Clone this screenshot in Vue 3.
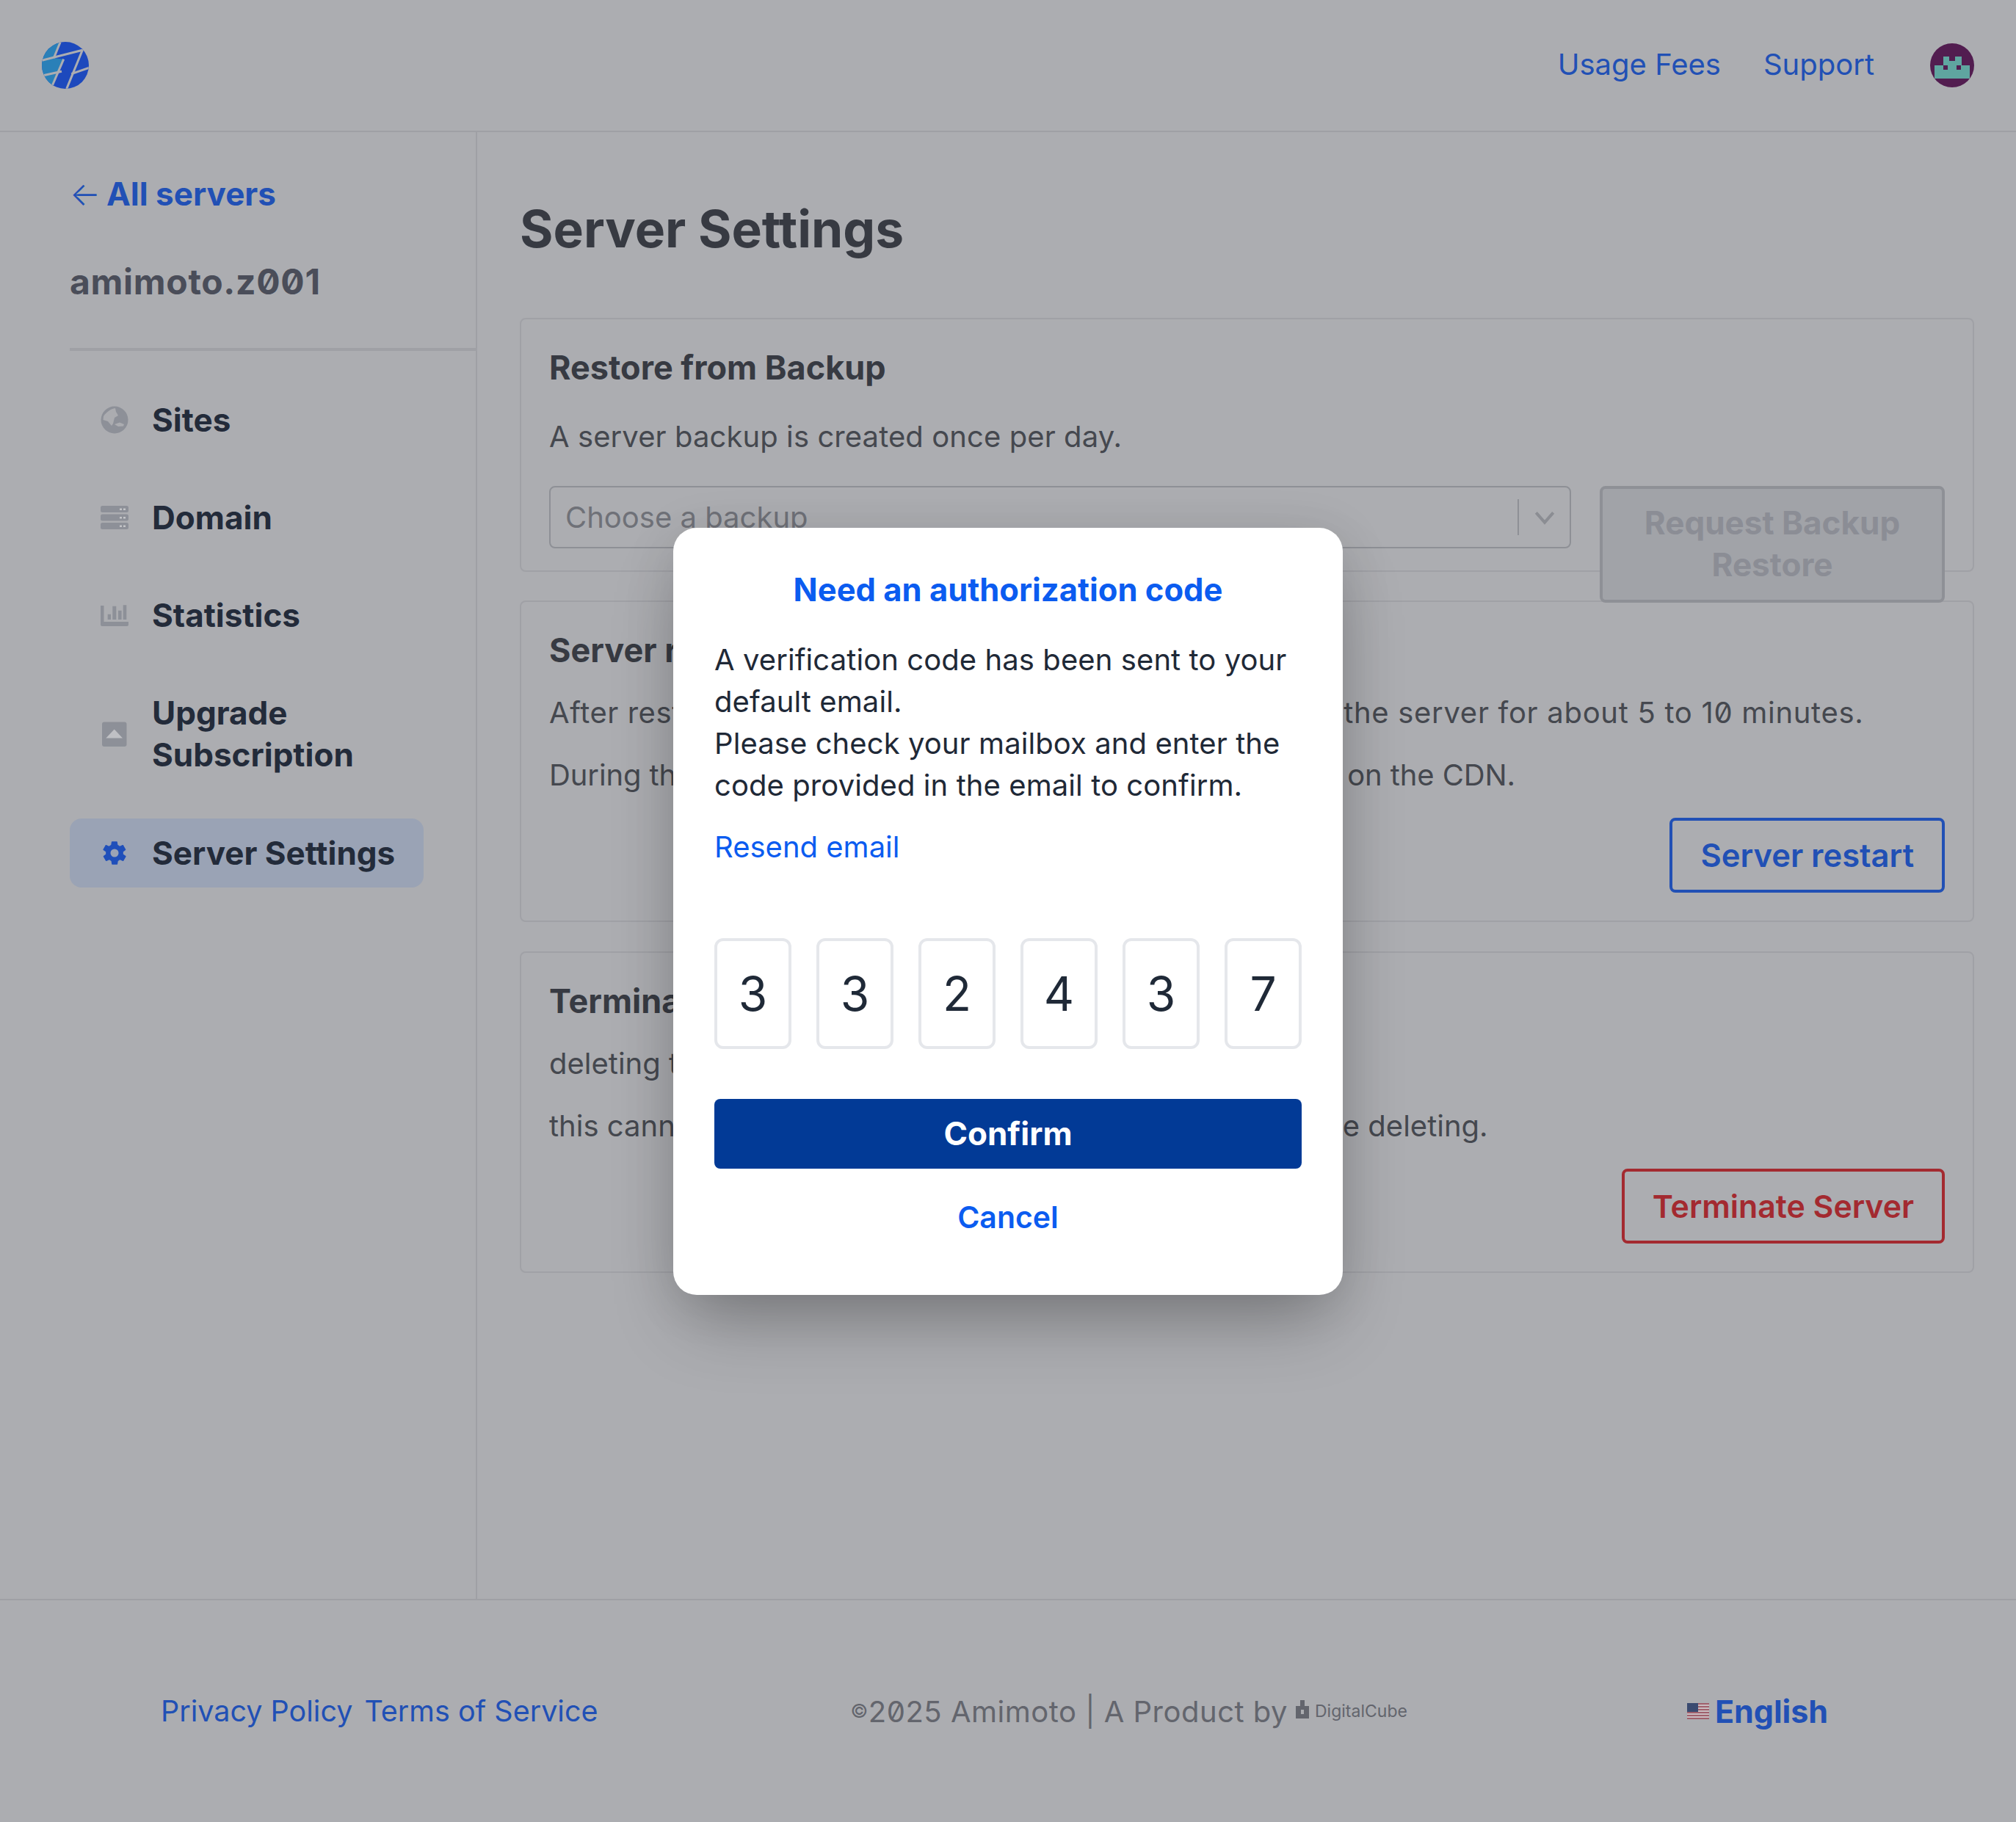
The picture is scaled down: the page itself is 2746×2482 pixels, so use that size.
<template>
  <div class="page">
    <header class="top">
      <svg class="logo" viewBox="0 0 64 64">
        <defs><clipPath id="lc"><circle cx="32" cy="32" r="32"/></clipPath></defs>
        <g clip-path="url(#lc)">
          <rect width="64" height="64" fill="#1d49bd"/>
          <path d="M0 0H25.3L16.3 22L29.7 23.7L15.3 57L15 64H0Z" fill="#2a80b8"/>
          <g stroke="#acadb1" stroke-width="3" fill="none">
            <path d="M25.3 0L16.3 22"/>
            <path d="M0 25.3L55.3 11.3L33.7 64"/>
            <path d="M29.7 23.7L14.5 59"/>
            <path d="M40.3 43.7L64 35.3"/>
            <path d="M2 45.8L27 40.3"/>
          </g>
        </g>
      </svg>
      <nav class="top-links">
        <a class="lnk">Usage Fees</a>
        <a class="lnk">Support</a>
        <svg class="avatar" viewBox="0 0 60 60">
          <circle cx="30" cy="30" r="30" fill="#521d50"/>
          <path d="M6 30H18V18H26V24H34V18H43V30H54V48H6Z" fill="#5fa5a0"/>
          <rect x="18" y="30" width="6" height="6" fill="#521d50"/>
          <rect x="36" y="30" width="6" height="6" fill="#521d50"/>
        </svg>
      </nav>
    </header>
    <div class="body">
      <aside class="side">
        <a class="back"><span class="arrow">←</span><b>All servers</b></a>
        <div class="srv">amimoto.z001</div>
        <ul class="menu">
          <li class="item">
            <svg class="ic" viewBox="0 0 38 38"><circle cx="19" cy="19" r="18.5" fill="#8d9098"/><path d="M4 14C8 8 14 4 20 3L21 8 24 13 19 16 17 24 15 27 10 21 3.500 19Z M19 25L26 22.500 32 25 31 27.500 24 28Z" fill="#abacb0"/></svg>
            <span>Sites</span>
          </li>
          <li class="item">
            <svg class="ic" viewBox="0 0 38 38"><path d="M2.500 3H35.500A2.500 2.500 0 0 1 38 5.500V9.500A2.500 2.500 0 0 1 35.500 12H2.500A2.500 2.500 0 0 1 0 9.500V5.500A2.500 2.500 0 0 1 2.500 3Z M2.500 14.500H35.500A2.500 2.500 0 0 1 38 17V21A2.500 2.500 0 0 1 35.500 23.500H2.500A2.500 2.500 0 0 1 0 21V17A2.500 2.500 0 0 1 2.500 14.500Z M2.500 26H35.500A2.500 2.500 0 0 1 38 28.500V32.500A2.500 2.500 0 0 1 35.500 35H2.500A2.500 2.500 0 0 1 0 32.500V28.500A2.500 2.500 0 0 1 2.500 26Z" fill="#8d9098"/><path d="M26 6.500h3v2.500h-3Z M31 6.500h3v2.500h-3Z M26 18h3v2.500h-3Z M31 18h3v2.500h-3Z M26 29.500h3v2.500h-3Z M31 29.500h3v2.500h-3Z" fill="#c3c4c7"/></svg>
            <span>Domain</span>
          </li>
          <li class="item">
            <svg class="ic" viewBox="0 0 38 38"><path d="M0 5H4.500V27H38V31A2 2 0 0 1 36 33H2A2 2 0 0 1 0 31Z M9.700 16.700H14V24H9.700Z M16.300 5.700H21.300V24H16.300Z M24 11.700H28.600V24H24Z M30.700 4.300H35.300V24H30.700Z" fill="#8d9098"/></svg>
            <span>Statistics</span>
          </li>
          <li class="item">
            <svg class="ic" viewBox="0 0 38 38"><rect x="2" y="2.500" width="33.500" height="33.500" rx="3" fill="#8d9098"/><path d="M7.300 24.500L18.700 12.500 30 24.500Z" fill="#bfc0c4"/></svg>
            <span>Upgrade<br>Subscription</span>
          </li>
          <li class="item on">
            <svg class="ic" viewBox="0 0 24 24"><path fill="#1f4fba" fill-rule="evenodd" d="M19.400 13c.1-.3.1-.7.1-1s0-.7-.1-1l2.100-1.600c.2-.2.2-.4.1-.6l-2-3.500c-.1-.2-.4-.3-.6-.2l-2.500 1c-.5-.4-1.100-.7-1.700-1l-.4-2.600c0-.3-.2-.5-.5-.5h-4c-.3 0-.5.2-.5.5l-.4 2.600c-.6.3-1.200.6-1.700 1l-2.500-1c-.2-.1-.5 0-.6.2l-2 3.500c-.1.2-.1.4.1.6L4.600 11c-.1.3-.1.7-.1 1s0 .7.1 1l-2.100 1.600c-.2.2-.2.4-.1.6l2 3.500c.1.2.4.3.6.2l2.500-1c.5.4 1.100.7 1.700 1l.4 2.600c0 .3.2.5.5.5h4c.3 0 .5-.2.5-.5l.4-2.600c.6-.3 1.200-.6 1.700-1l2.500 1c.2.1.5 0 .6-.2l2-3.500c.1-.2.1-.4-.1-.6ZM12 15.500a3.500 3.500 0 1 1 0-7 3.500 3.500 0 0 1 0 7Z"/></svg>
            <span>Server Settings</span>
          </li>
        </ul>
      </aside>
      <main class="main">
        <h1>Server Settings</h1>
        <section class="card c1">
          <h2>Restore from Backup</h2>
          <p>A server backup is created once per day.</p>
          <div class="row">
            <div class="sel">
              <span>Choose a backup</span>
              <i class="sep"></i>
              <svg class="chev" viewBox="0 0 24 24"><path d="M5 8l7 8 7-8" fill="none" stroke="#8b8d93" stroke-width="2.400"/></svg>
            </div>
            <div class="btn dis">Request Backup<br>Restore</div>
          </div>
        </section>
        <section class="card c2">
          <h2>Server restart</h2>
          <p class="t1 wide">After restarting the server, you will not be able to reach <span class="end">the server for about 5 to 10 minutes.</span></p>
          <p class="t2 tight">During this time, your cached pages will still be displayed on the CDN.</p>
          <div class="act"><div class="btn pri">Server restart</div></div>
        </section>
        <section class="card c2 c3">
          <h2>Terminate Server</h2>
          <p class="t1">deleting this server will also remove all of its data,</p>
          <p class="t2">this cannot be undone, so please make any backup before deleting.</p>
          <div class="act"><div class="btn red">Terminate Server</div></div>
        </section>
      </main>
    </div>
    <footer class="foot">
      <div class="f-l"><a class="lnk">Privacy Policy</a><a class="lnk">Terms of Service</a></div>
      <div class="f-c">
        <span class="copy"><small>©</small>2025 Amimoto | A Product by</span>
        <svg class="dc" viewBox="0 0 18 25"><path d="M0 8H6V0H12V8H18V25H0Z M7 13V19H11V13Z" fill="#63656d" fill-rule="evenodd"/></svg>
        <span class="dct">DigitalCube</span>
      </div>
      <div class="f-r">
        <svg class="flag" viewBox="0 0 30 22">
          <rect width="30" height="22" fill="#c9bcc0"/>
          <path d="M0 0H30V2H0Z M0 4H30V6H0Z M0 8H30V10H0Z M0 12H30V14H0Z M0 16H30V18H0Z M0 20H30V22H0Z" fill="#a0606c"/>
          <rect width="15" height="12" fill="#3a4a70"/>
        </svg>
        <b>English</b>
      </div>
    </footer>
    <div class="backdrop">
      <div class="modal">
        <h3>Need an authorization code</h3>
        <p class="msg">A verification code has been sent to your default email.<br>Please check your mailbox and enter the code provided in the email to confirm.</p>
        <a class="resend">Resend email</a>
        <div class="code">
          <span v-for="(d, i) in digits" :key="i" class="digit">{{ d }}</span>
        </div>
        <div class="confirm">Confirm</div>
        <div class="cancel">Cancel</div>
      </div>
    </div>
  </div>
</template>

<script setup>
const digits = ['3', '3', '2', '4', '3', '7']
</script>

<style>
html, body { margin: 0; }
</style>

<style scoped>
.page {
  position: relative; width: 2746px; height: 2482px; background: #acadb1; overflow: hidden;
  font-family: Inter, "Liberation Sans", sans-serif; font-size: 40px; line-height: 57px; color: #3c3f47;
  font-feature-settings: "zero";
  display: flex; flex-direction: column;
}
.top { height: 178px; flex: none; border-bottom: 2px solid #9fa0a5; display: flex; align-items: center; justify-content: space-between; padding: 0 57px; }
.logo { width: 64px; height: 64px; }
.top-links { display: flex; align-items: center; }
.top-links .lnk { padding-bottom: 3px; }
.lnk { color: #2150b5; }
.top-links .lnk:nth-child(1) { margin-right: 58px; }
.top-links .lnk:nth-child(2) { margin-right: 76px; }
.avatar { width: 60px; height: 60px; }
.body { flex: 1; display: flex; min-height: 0; }
.side { width: 553px; margin-left: 95px; border-right: 2px solid #9fa0a5; flex: none; box-sizing: content-box; }
.back { display: block; margin-top: 56px; color: #2150b5; height: 57px; font-size: 44px; }
.back b { font-weight: 700; margin-left: 8px; }
.arrow { font-weight: 300; }
.srv { margin-top: 59px; font-size: 48px; line-height: 64px; letter-spacing: .7px; font-weight: 700; color: #4a4d59; padding-bottom: 58px; border-bottom: 4px solid #9fa0a5; }
.menu { list-style: none; margin: 47px 0 0; padding: 0; width: 482px; display: flex; flex-direction: column; gap: 39.250px; }
.item { display: flex; align-items: center; padding: 18.500px 0 18.500px 42px; gap: 32px; font-weight: 700; font-size: 44px; color: #232b3a; border-radius: 16px; line-height: 57px; white-space: nowrap; }
.item.on { background: #9aa3b5; }
.ic { width: 38px; height: 38px; flex: none; }
.main { flex: 1; padding: 0 57px 0 58px; }
h1 { margin: 92px 0 0; font-size: 69.500px; line-height: 80px; font-weight: 700; color: #373a42; height: 80px; }
.card { border: 2px solid #a0a1a6; border-radius: 8px; padding: 38px 38px 0; box-sizing: border-box; }
.c1 { margin-top: 81px; height: 346px; }
.c2 { margin-top: 39px; height: 438px; }
.c3 { margin-top: 40px; }
h2 { margin: 0; font-size: 45px; line-height: 56px; font-weight: 700; color: #373a42; }
p { margin: 0; }
.card p { color: #45484f; white-space: nowrap; }
.c1 p { margin-top: 37px; letter-spacing: .08px; }
.row { display: flex; gap: 39px; margin-top: 39px; align-items: flex-start; }
.sel { flex: 1; height: 85px; box-sizing: border-box; border: 2px solid #8e9096; border-radius: 8px; display: flex; align-items: center; padding: 0 14px 0 20px; color: #6f7178; }
.sel span { flex: 1; }
.sep { width: 2px; height: 49px; background: #8e9096; margin-right: 15px; }
.chev { width: 40px; height: 40px; }
.btn { border-width: 4px; border-style: solid; border-radius: 8px; box-sizing: border-box; font-weight: 600; font-size: 44px; text-align: center; }
.dis { width: 470px; height: 159px; flex: none; padding-top: 18px; background: #a1a3a8; border-color: #8e9096; color: #8b8d95; font-weight: 700; }
.c2 .t1 { margin-top: 28px; }
.c2 .t2 { margin-top: 28px; }
.wide { letter-spacing: .55px; }
.end { letter-spacing: .7px; }
.tight { letter-spacing: -.1px; }
.act { display: flex; justify-content: flex-end; margin-top: 30px; }
.pri { padding: 18.500px 38px; color: #2150b5; border-color: #2150b5; font-size: 43.500px; }
.red { padding: 18.500px 38px; color: #a32a30; border-color: #a32a30; font-size: 42.800px; }
.foot { height: 304px; flex: none; box-sizing: border-box; border-top: 2px solid #9fa0a5; display: flex; align-items: center; padding-left: 219px; }
.f-l { display: flex; gap: 16px; font-size: 39.500px; }
.f-c { margin-left: 344px; display: flex; align-items: center; color: #63656d; }
.copy { letter-spacing: .5px; }
.copy small { font-size: 26px; vertical-align: 6px; }
.dc { width: 18px; height: 25px; margin: -6px 0 0 11px; }
.dct { font-size: 23px; margin-left: 8px; }
.f-r { margin-left: 381px; display: flex; align-items: center; color: #2150b5; gap: 8px; }
.f-r b { font-weight: 700; font-size: 43px; }
.flag { width: 30px; height: 22px; }
.backdrop { position: absolute; inset: 0; display: flex; align-items: center; justify-content: center; }
.modal { width: 912px; height: 1045px; box-sizing: border-box; background: #fff; border-radius: 32px; padding: 56px; box-shadow: 0 50px 100px -20px rgba(0,0,0,.28), 0 10px 70px rgba(0,0,0,.1); color: #1f2937; }
h3 { margin: 0; text-align: center; font-size: 43.500px; line-height: 56px; font-weight: 700; color: #0b5cf0; }
.msg { margin-top: 39px; letter-spacing: .08px; }
.resend { display: block; margin-top: 27px; color: #0b5cf0; }
.code { margin-top: 96px; display: flex; justify-content: space-between; }
.digit { width: 105px; height: 151px; box-sizing: border-box; border: 4px solid #e5e7eb; border-radius: 12px; display: flex; align-items: center; justify-content: center; font-size: 64px; }
.confirm { margin-top: 68px; height: 95px; border-radius: 8px; background: #023a96; color: #fff; font-weight: 700; font-size: 44px; display: flex; align-items: center; justify-content: center; }
.cancel { margin-top: 38px; text-align: center; color: #0b5cf0; font-weight: 600; font-size: 41px; }
</style>
